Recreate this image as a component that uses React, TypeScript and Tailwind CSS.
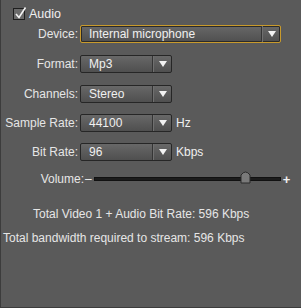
import React from "react";

const Arrow = () => (
  <svg width="8" height="6" viewBox="0 0 8 6" className="block">
    <path d="M0 0 L8 0 L4 6 Z" fill="#f2f2f2" />
  </svg>
);

const Select = ({ value, width, focused }: { value: string; width: string; focused?: boolean }) => (
  <div
    className={`${width} h-[18px] flex items-stretch rounded-[2px] border ${
      focused ? "border-[#c89a2c] ring-1 ring-[#2a2a2a] ring-inset" : "border-[#262626]"
    } bg-gradient-to-b from-[#686868] to-[#4f4f4f]`}
  >
    <div className="flex-1 flex items-center pl-[8px] text-[#f0f0f0] leading-none">{value}</div>
    <div className="w-px bg-[#353535]" />
    <div className="w-px bg-[#707070]" />
    <div className="w-[17px] flex items-center justify-center">
      <Arrow />
    </div>
  </div>
);

const Row = ({ label, children }: { label: string; children: React.ReactNode }) => (
  <div className="flex items-center h-[18px]">
    <div className="w-[79px] text-right pr-[2px] text-[#e6e6e6] leading-none">{label}</div>
    <div className="flex items-center">{children}</div>
  </div>
);

export default function App() {
  return (
    <div
      className="w-[301px] h-[308px] bg-[#5a5a5a] border-l border-b border-[#3c3c3c] text-[12px] text-[#e6e6e6] overflow-hidden"
      style={{ fontFamily: '"Liberation Sans", Arial, sans-serif' }}
    >
      {/* Audio checkbox */}
      <div className="flex items-center pt-[5px] pl-[12px] h-[18px] box-content">
        <div className="relative w-[12px] h-[12px] border border-[#1e1e1e] bg-[#6a6a6a]">
          <svg width="14" height="14" viewBox="0 0 14 14" className="absolute -top-[3px] left-0">
            <path d="M2 8 L5 11.5 L11.5 1.5" stroke="#f4f4f4" strokeWidth="1.6" fill="none" />
          </svg>
        </div>
        <span className="ml-[4px] text-[12.5px] text-[#f0f0f0]">Audio</span>
      </div>

      <div className="flex flex-col gap-[11px] mt-[2px]">
        <Row label="Device:">
          <Select value="Internal microphone" width="w-[201px]" focused />
        </Row>
        <div className="mt-[1px]">
          <Row label="Format:">
            <Select value="Mp3" width="w-[92px]" />
          </Row>
        </div>
        <div className="mt-[1px]">
          <Row label="Channels:">
            <Select value="Stereo" width="w-[92px]" />
          </Row>
        </div>
        <Row label="Sample Rate:">
          <Select value="44100" width="w-[92px]" />
          <span className="ml-[4px] text-[#f0f0f0]">Hz</span>
        </Row>
        <Row label="Bit Rate:">
          <Select value="96" width="w-[92px]" />
          <span className="ml-[4px] text-[#f0f0f0]">Kbps</span>
        </Row>

        {/* Volume */}
        <div className="flex items-center h-[16px] mt-[-1px]">
          <div className="w-[83px] text-right text-[#e6e6e6] leading-none">Volume:</div>
          <span className="ml-[1px] text-[#f0f0f0] leading-none">–</span>
          <div className="relative ml-[2px] w-[187px] h-[4px] bg-[#1c1c1c] border border-[#111]">
            <svg width="11" height="14" viewBox="0 0 11 14" className="absolute -top-[8px] left-[145px]">
              <path d="M1 5 Q5.5 -1 10 5 L10 13 L1 13 Z" fill="#7a7a7a" stroke="#2a2a2a" strokeWidth="1" />
            </svg>
          </div>
          <span className="ml-[2px] text-[13px] font-bold text-[#f0f0f0] leading-none">+</span>
        </div>
      </div>

      <div className="mt-[18px] pl-[32px] text-[#e6e6e6]">Total Video 1 + Audio Bit Rate: 596 Kbps</div>
      <div className="mt-[6px] pl-[2px] text-[#e6e6e6]">Total bandwidth required to stream: 596 Kbps</div>
    </div>
  );
}
